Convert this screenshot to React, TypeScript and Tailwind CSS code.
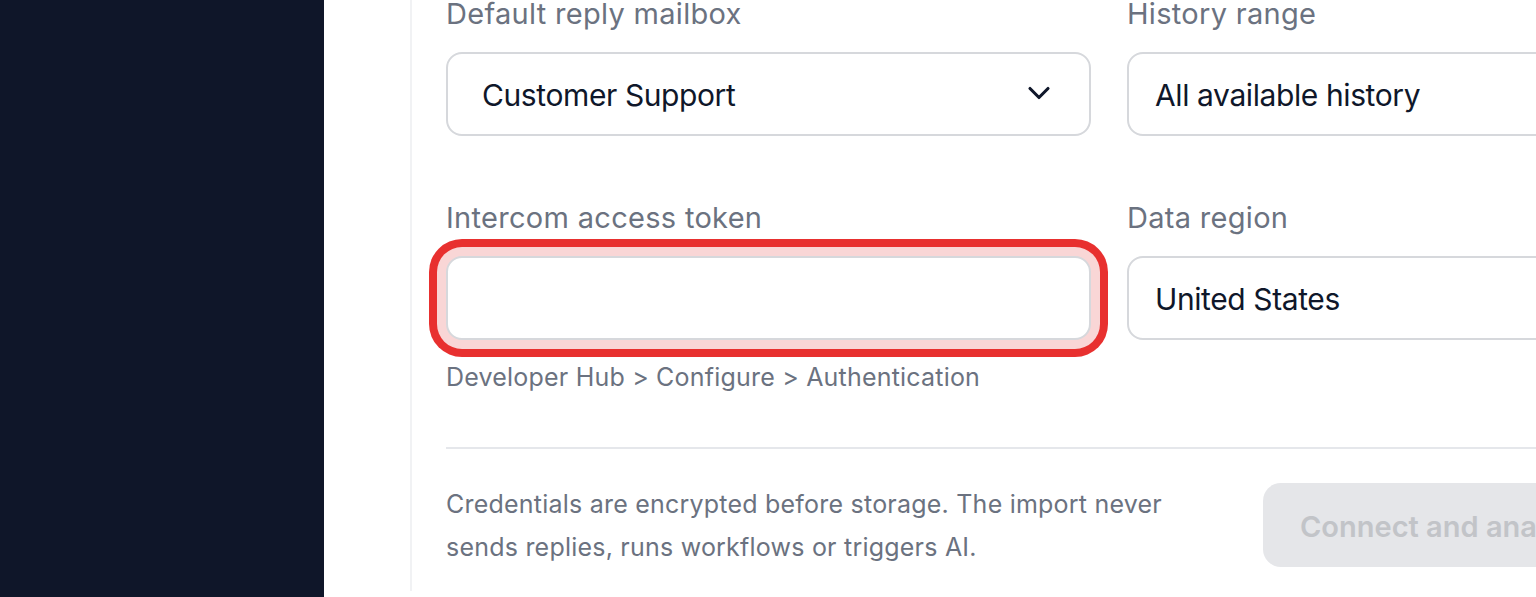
import React from 'react';
import { ChevronDown } from 'lucide-react';

const labelCls = "block text-[29px] leading-[40px] tracking-[0.3px] text-[#6b7280]";

const SelectBox = ({ value, chevron }: { value: string; chevron?: boolean }) => (
  <div
    className={
      chevron
        ? "mt-[18px] flex h-[84px] items-center justify-between rounded-[16px] border-2 border-[#d6d8dc] bg-white pb-[2px] pl-[34px] pr-[32px]"
        : "mt-[18px] flex h-[84px] items-center justify-between rounded-[16px] border-2 border-[#d6d8dc] bg-white pb-[2px] pl-[26px] pr-[32px]"
    }
  >
    <span className="pt-[4px] text-[30px] tracking-[-0.4px] text-[#0f172a]">{value}</span>
    {chevron && <ChevronDown size={36} strokeWidth={2.1} className="text-[#0f172a]" />}
  </div>
);

export default function App() {
  return (
    <div
      className="flex h-[597px] w-[1536px] overflow-hidden bg-white"
      style={{ fontFamily: 'Inter, "Noto Sans", sans-serif' }}
    >
      <aside className="h-full w-[324px] shrink-0 bg-[#0f1629]" />
      <main className="flex-1 pl-[86px]">
        <div className="h-full w-[1500px] border-l-2 border-[#f1f2f4] pl-[34px]">
          <div className="-mt-[6px] grid grid-cols-[645px_645px] gap-x-[36px] gap-y-[62px]">
            <div>
              <label className={labelCls}>Default reply mailbox</label>
              <SelectBox value="Customer Support" chevron />
            </div>
            <div>
              <label className={labelCls}>History range</label>
              <SelectBox value="All available history" />
            </div>
            <div>
              <label htmlFor="token" className={labelCls}>Intercom access token</label>
              <input
                id="token"
                type="password"
                className="mt-[18px] block h-[84px] w-full rounded-[16px] border-2 border-[#d6d8dc] bg-white px-[34px] text-[28px] outline-none shadow-[0_0_0_9px_#f9d6d6,0_0_0_17px_#e8302f]"
              />
              <p className="mt-[19px] text-[25px] leading-[36px] tracking-[0.2px] text-[#6b7280]">
                Developer Hub &gt; Configure &gt; Authentication
              </p>
            </div>
            <div>
              <label className={labelCls}>Data region</label>
              <SelectBox value="United States" />
            </div>
          </div>

          <div className="mt-[52px] h-[2px] bg-[#e5e7eb]" />

          <div className="mt-[34px] flex items-start">
            <p className="w-[750px] text-[25px] leading-[43px] tracking-[0.22px] text-[#6b7280]">
              Credentials are encrypted before storage. The import never sends replies, runs workflows or triggers AI.
            </p>
            <button
              type="button"
              disabled
              className="ml-[67px] h-[84px] shrink-0 rounded-[18px] bg-[#e5e6e9] px-[37px] pt-[4px] text-[29px] font-semibold text-[#c2c4c8]"
            >
              Connect and analyze
            </button>
          </div>
        </div>
      </main>
    </div>
  );
}
